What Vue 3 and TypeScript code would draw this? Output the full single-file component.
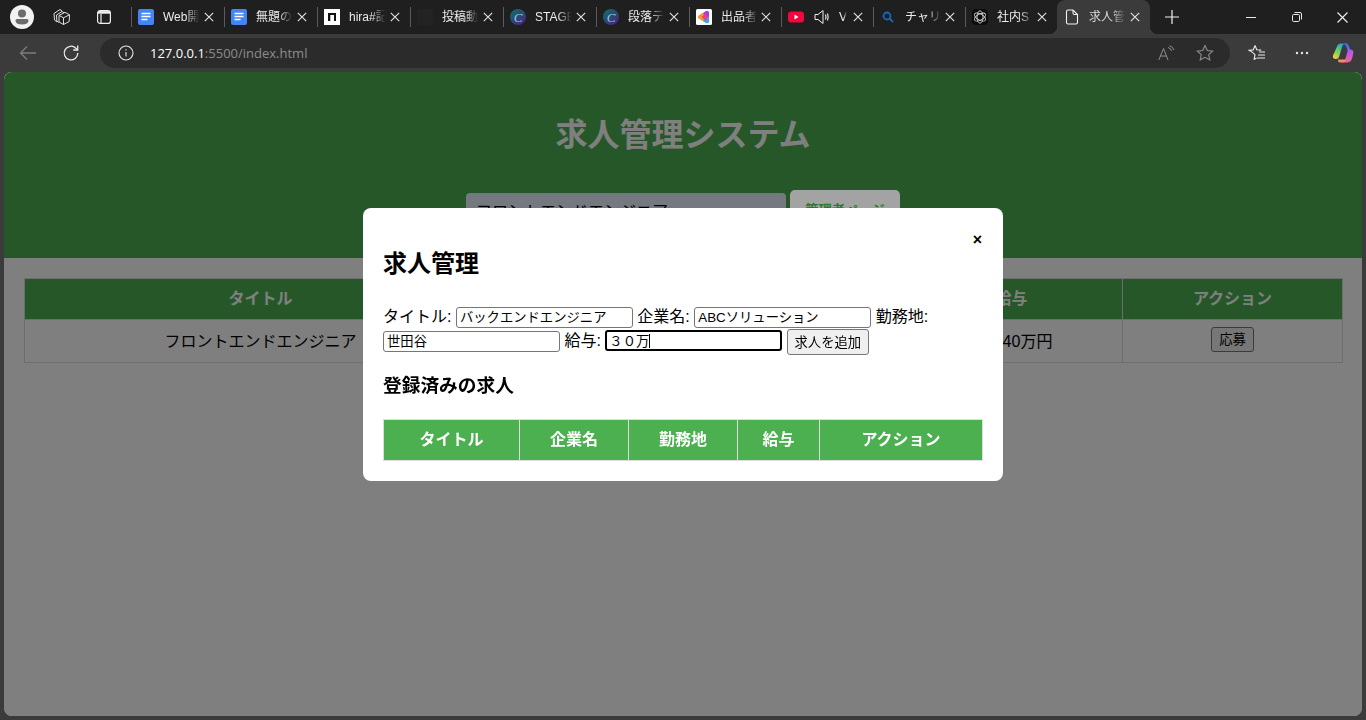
<script setup lang="ts">
import { onMounted, ref } from 'vue'

interface BrowserTab {
  title: string
  icon: string
  width: number
  active?: boolean
}

const tabs: BrowserTab[] = [
  { title: 'Web開', icon: 'doc', width: 93 },
  { title: '無題の', icon: 'doc', width: 93 },
  { title: 'hira#記', icon: 'notion', width: 93 },
  { title: '投稿動', icon: 'dark', width: 93 },
  { title: 'STAGE', icon: 'circle', width: 93 },
  { title: '段落テ', icon: 'circle', width: 93 },
  { title: '出品者', icon: 'rainbow', width: 92 },
  { title: 'V', icon: 'youtube', width: 92 },
  { title: 'チャリD', icon: 'search', width: 92 },
  { title: '社内S', icon: 'gpt', width: 92 },
  { title: '求人管', icon: 'file', width: 93, active: true },
]

const salaryInput = ref<HTMLInputElement | null>(null)

onMounted(() => {
  const el = salaryInput.value
  if (el) {
    el.focus()
    el.setSelectionRange(el.value.length, el.value.length)
  }
})
</script>

<template>
  <div class="window">
    <div class="tabstrip">
      <div class="strip-left">
        <div class="avatar">
          <svg width="24" height="24" viewBox="0 0 24 24">
            <circle cx="12" cy="12" r="12" fill="#f2f2f2" />
            <circle cx="12" cy="8.500" r="4" fill="#6b6b6b" />
            <path d="M5.500 15.500q0-1.500 1.500-1.500h10q1.500 0 1.500 1.500q0 4-6.500 4t-6.500-4z" fill="#6b6b6b" />
          </svg>
        </div>
        <svg class="strip-icon" width="18" height="18" viewBox="0 0 18 18" fill="none" stroke="#e0e0e0" stroke-width="1">
          <path d="M1 5.500L7 1.500l2 1.300M3.500 7L9 3.500l2 1.200" />
          <path d="M1 5.500l.5 6.500 2.500 2M3.500 7l.3 6 2 1.500" />
          <path d="M6 7.500l6-3.200 4.500 2.500-.3 6.700-5.700 3-4.500-2.500z" />
          <path d="M10.500 9.800v6.700M6 7.500l4.500 2.300 6-3" />
        </svg>
        <svg class="strip-icon" width="16" height="16" viewBox="0 0 16 16" fill="none" stroke="#f0f0f0" stroke-width="1.200">
          <rect x="1.600" y="1.600" width="12.800" height="12.800" rx="2.500" />
          <path d="M2 3.400h12" stroke-width="2.600" />
          <path d="M5 4.800v9.600" />
        </svg>
      </div>

      <div
        v-for="tab in tabs"
        :key="tab.icon + tab.title"
        class="tab"
        :class="{ active: tab.active }"
        :style="{ width: tab.width + 'px' }"
      >
        <span class="tab-sep"></span>
        <svg v-if="tab.icon === 'doc'" width="16" height="16" viewBox="0 0 16 16">
          <rect width="16" height="16" rx="2" fill="#4285f4" />
          <path d="M3.500 4.500h9M3.500 7.500h9M3.500 10.500h6" stroke="#fff" stroke-width="1.500" />
        </svg>
        <svg v-else-if="tab.icon === 'notion'" width="16" height="16" viewBox="0 0 16 16">
          <rect width="16" height="16" fill="#fff" />
          <path d="M4 4h8v8h-2V6H6.300v6H4z" fill="#111" />
        </svg>
        <svg v-else-if="tab.icon === 'dark'" width="16" height="16" viewBox="0 0 16 16">
          <rect width="16" height="16" rx="3" fill="#232323" />
        </svg>
        <svg v-else-if="tab.icon === 'circle'" width="16" height="16" viewBox="0 0 16 16">
          <defs>
            <linearGradient id="stageFill" x1="0" y1="0" x2="0.700" y2="1">
              <stop offset="0" stop-color="#12706b" />
              <stop offset="0.500" stop-color="#24506f" />
              <stop offset="1" stop-color="#4a2485" />
            </linearGradient>
          </defs>
          <circle cx="8" cy="8" r="8" fill="url(#stageFill)" />
          <text x="8" y="12.500" text-anchor="middle" class="stage-letter">C</text>
        </svg>
        <svg v-else-if="tab.icon === 'rainbow'" width="16" height="16" viewBox="0 0 16 16">
          <rect width="16" height="16" rx="1.500" fill="#fff" />
          <path d="M2 8q0-1 1-1.600L10 2q2.500-1.200 3 1.500V8z" fill="#a63be8" />
          <path d="M2 8q0 1 1 1.600L10 14q2.500 1.200 3-1.500V8z" fill="#35a7ea" />
          <path d="M2 8q0-1 1-1.600L7.500 3.500 8 8l-.5 4.500L3 9.600Q2 9 2 8z" fill="#f6a01e" />
          <path d="M5.500 8L9.500 4.500 12 8l-2.500 3.500z" fill="#ee3d93" />
        </svg>
        <template v-else-if="tab.icon === 'youtube'">
          <svg width="16" height="12" viewBox="0 0 16 12">
            <rect width="16" height="11" y="0.500" rx="3" fill="#f4063c" />
            <path d="M6.500 3.500l4 2.500-4 2.500z" fill="#fff" />
          </svg>
          <svg class="speaker" width="16" height="16" viewBox="0 0 16 16" fill="none" stroke="#efefef" stroke-width="1">
            <path d="M1 5.500h3L9 1.500v13l-5-4H1z" />
            <path d="M11.500 5.500q1 2.500 0 5M13.500 4.500q1.300 3.500 0 7" stroke-width="1.100" />
          </svg>
        </template>
        <svg v-else-if="tab.icon === 'search'" width="16" height="16" viewBox="0 0 16 16" fill="none" stroke="#0f6cbd" stroke-width="1.800">
          <circle cx="7" cy="7" r="3.500" />
          <path d="M9.700 9.700l3.300 3.300" />
        </svg>
        <svg v-else-if="tab.icon === 'gpt'" width="16" height="16" viewBox="0 0 16 16">
          <rect width="16" height="16" rx="4" fill="#0c0c0c" />
          <g fill="none" stroke="#cfcfcf" stroke-width=".9">
            <ellipse cx="8" cy="8" rx="3" ry="6.200" />
            <ellipse cx="8" cy="8" rx="3" ry="6.200" transform="rotate(60 8 8)" />
            <ellipse cx="8" cy="8" rx="3" ry="6.200" transform="rotate(120 8 8)" />
          </g>
        </svg>
        <svg v-else width="16" height="16" viewBox="0 0 16 16" fill="none" stroke="#f2f2f2" stroke-width="1.100">
          <path d="M2.500 2.500Q2.500 1 4 1h5l4.500 4.500v8Q13.500 15 12 15H4q-1.500 0-1.500-1.500zM9 1v3q0 1.500 1.500 1.500h3" />
        </svg>
        <span class="tab-title" :class="{ narrow: tab.icon === 'youtube' }">{{ tab.title }}</span>
        <svg class="tab-close" width="10" height="10" viewBox="0 0 10 10" stroke="#e4e4e4" stroke-width="1.100">
          <path d="M.8 .8l8.400 8.400M9.200 .8L.8 9.200" />
        </svg>
      </div>

      <svg class="new-tab" width="16" height="16" viewBox="0 0 16 16" stroke="#f0f0f0" stroke-width="1.200">
        <path d="M8 1v14M1 8h14" />
      </svg>

      <div class="window-controls">
        <svg width="10" height="10" viewBox="0 0 10 10" stroke="#e8e8e8"><path d="M0 5.500h10" /></svg>
        <svg width="10" height="10" viewBox="0 0 10 10" fill="none" stroke="#e8e8e8">
          <rect x=".5" y="2.500" width="7" height="7" rx="1.200" />
          <path d="M2.500 .5h5.500q1.500 0 1.500 1.500v5.500" />
        </svg>
        <svg width="11" height="11" viewBox="0 0 11 11" stroke="#f0f0f0" stroke-width="1.100"><path d="M.5 .5l10 10M10.500 .5l-10 10" /></svg>
      </div>
    </div>

    <div class="toolbar">
      <svg class="tool-back" width="18" height="16" viewBox="0 0 18 16" fill="none" stroke="#7d7d7d" stroke-width="1.300">
        <path d="M17 8H1.500M8 1.500L1.500 8 8 14.500" />
      </svg>
      <svg class="tool-reload" width="18" height="18" viewBox="0 0 18 18" fill="none" stroke="#ececec" stroke-width="1.300">
        <path d="M15.800 9a6.800 6.800 0 1 1-2-4.800L15.500 6" />
        <path d="M15.700 1.500V6h-4.500" />
      </svg>

      <div class="address">
        <svg width="16" height="16" viewBox="0 0 16 16" fill="none" stroke="#e6e6e6" stroke-width="1.100">
          <circle cx="8" cy="8" r="7" />
          <path d="M8 7v4.500M8 4.200v1.300" />
        </svg>
        <span class="url"><span class="url-host">127.0.0.1</span>:5500/index.html</span>
        <span class="address-spacer"></span>
        <svg width="16" height="16" viewBox="0 0 16 16" fill="none" stroke="#8f8f8f" stroke-width="1">
          <path d="M.8 15L5.500 3.500 10 15M2.500 11h6" />
          <path d="M10 2.500q3 .5 3.500 3.500M11.500 .8q3.800 .8 4.200 4.200" />
        </svg>
        <svg class="address-star" width="18" height="18" viewBox="0 0 18 18" fill="none" stroke="#8f8f8f" stroke-width="1.100">
          <path d="M9 1.500l2.300 5 5.400 .6-4 3.600 1.100 5.300L9 13.300 4.200 16l1.100-5.300-4-3.600 5.400-.6z" />
        </svg>
      </div>

      <svg class="tool-fav" width="18" height="18" viewBox="0 0 18 18" fill="none" stroke="#ececec" stroke-width="1.100">
        <path d="M7 1.500l1.800 4.300 4.400 .3M6 15.500l1-4.800L3 7.200l-2.500-1 4.700-.3L7 1.500M6 15.500l2.500-1.500" />
        <path d="M11 8h6M10 11h7M9 14h8" />
      </svg>
      <svg class="tool-more" width="14" height="4" viewBox="0 0 14 4" fill="#e8e8e8">
        <circle cx="2" cy="2" r="1.200" /><circle cx="7" cy="2" r="1.200" /><circle cx="12" cy="2" r="1.200" />
      </svg>
      <svg class="tool-copilot" width="22" height="22" viewBox="0 0 22 22">
        <defs>
          <linearGradient id="copLeft" x1="0.700" y1="0" x2="0.200" y2="1">
            <stop offset="0" stop-color="#1f9fd8" />
            <stop offset="0.450" stop-color="#5fd06a" />
            <stop offset="1" stop-color="#f2d23a" />
          </linearGradient>
          <linearGradient id="copRight" x1="0.400" y1="0" x2="0.600" y2="1">
            <stop offset="0" stop-color="#1f6ff0" />
            <stop offset="0.450" stop-color="#a65cf0" />
            <stop offset="1" stop-color="#f4608f" />
          </linearGradient>
        </defs>
        <path d="M5.500 3.500Q6.300 1.500 8.500 1.500H13Q10.800 2 10 5l-2.800 9.500Q6.500 17 4 17H3.200Q.3 16.500 1 13.500z" fill="url(#copLeft)" />
        <path d="M11.500 1h2.300q2 0 2.800 2.200l1.400 4.300h1.200q2.300 .5 2.300 3l-1.300 5.500q-1 4-4.700 4.500H9.500q3-.6 4-4l2-7q.7-3-4-8.500z" fill="url(#copRight)" />
        <path d="M6 17.500h8.500q-1 2.800-3.500 3H8q-2.200 0-2-3z" fill="#f78a5e" />
      </svg>
    </div>

    <div class="viewport">
      <div class="page">
        <header class="page-header">
          <h1>求人管理システム</h1>
          <div class="search-row">
            <input class="search-input" type="text" value="フロントエンドエンジニア" readonly />
            <button class="admin-button" type="button">管理者ページ</button>
          </div>
        </header>

        <main class="page-main">
          <table class="jobs-table">
            <colgroup>
              <col class="col-title" />
              <col class="col-mid" />
              <col class="col-mid" />
              <col class="col-salary" />
              <col class="col-action" />
            </colgroup>
            <thead>
              <tr>
                <th>タイトル</th>
                <th>企業名</th>
                <th>勤務地</th>
                <th>給与</th>
                <th>アクション</th>
              </tr>
            </thead>
            <tbody>
              <tr>
                <td>フロントエンドエンジニア</td>
                <td></td>
                <td></td>
                <td>月給40万円</td>
                <td><button class="plain-button" type="button">応募</button></td>
              </tr>
            </tbody>
          </table>
        </main>

        <div class="overlay">
          <section class="modal">
            <span class="modal-close">×</span>
            <h2>求人管理</h2>
            <form class="job-form" @submit.prevent>
              <label>タイトル:</label>
              {{ ' ' }}<input class="field" type="text" value="バックエンドエンジニア" />{{ ' ' }}
              <label>企業名:</label>
              {{ ' ' }}<input class="field" type="text" value="ABCソリューション" />{{ ' ' }}
              <label>勤務地:</label>
              {{ ' ' }}<input class="field" type="text" value="世田谷" />{{ ' ' }}
              <label>給与:</label>
              {{ ' ' }}<input ref="salaryInput" class="field" type="text" value="３０万" />{{ ' ' }}
              <button class="plain-button add-button" type="submit">求人を追加</button>
            </form>
            <h3>登録済みの求人</h3>
            <table class="registered-table">
              <colgroup>
                <col class="reg-1" />
                <col class="reg-2" />
                <col class="reg-2" />
                <col class="reg-3" />
                <col class="reg-4" />
              </colgroup>
              <thead>
                <tr>
                  <th>タイトル</th>
                  <th>企業名</th>
                  <th>勤務地</th>
                  <th>給与</th>
                  <th>アクション</th>
                </tr>
              </thead>
            </table>
          </section>
        </div>
      </div>
    </div>
  </div>
</template>

<style scoped>
.window {
  width: 1366px;
  height: 720px;
  display: flex;
  flex-direction: column;
  overflow: hidden;
  background: #3b3b3b;
  font-family: "Liberation Sans", "Noto Sans CJK JP", sans-serif;
}

/* browser chrome */
.tabstrip {
  height: 34px;
  flex: none;
  display: flex;
  align-items: center;
  background: #1f1f1f;
}

.strip-left {
  width: 131px;
  flex: none;
  display: flex;
  align-items: center;
  padding-left: 10px;
  box-sizing: border-box;
}

.avatar {
  display: flex;
  width: 24px;
  height: 24px;
}

.strip-icon:nth-child(2) {
  margin-left: 19px;
}

.strip-icon:nth-child(3) {
  margin-left: 25px;
}

.tab {
  height: 34px;
  flex: none;
  box-sizing: border-box;
  display: flex;
  align-items: center;
  position: relative;
  color: #ececec;
  font-size: 12px;
}

.tab-sep {
  width: 1px;
  height: 20px;
  margin-right: 6px;
  background: #5c5c5c;
  flex: none;
}

.tab svg {
  flex: none;
}

.speaker {
  margin-left: 10px;
}

.tab-title {
  width: 38px;
  margin-left: 9px;
  white-space: nowrap;
  overflow: hidden;
  flex: none;
  line-height: 16px;
  -webkit-mask-image: linear-gradient(to right, #000 60%, transparent 96%);
  mask-image: linear-gradient(to right, #000 60%, transparent 96%);
}

.tab-title.narrow {
  width: 8px;
}

.tab-close {
  position: absolute;
  right: 10px;
  top: 12px;
}

.tab.active {
  background: #3b3b3b;
  border-radius: 8px 8px 0 0;
}

.tab.active .tab-sep {
  visibility: hidden;
}

.tab.active .tab-title {
  color: #d8d8d8;
}

.tab.active::before,
.tab.active::after {
  content: "";
  position: absolute;
  bottom: 0;
  width: 8px;
  height: 8px;
}

.tab.active::before {
  left: -8px;
  background: radial-gradient(circle at 0 0, transparent 8px, #3b3b3b 8.5px);
}

.tab.active::after {
  right: -8px;
  background: radial-gradient(circle at 100% 0, transparent 8px, #3b3b3b 8.5px);
}

.new-tab {
  margin-left: 14px;
  flex: none;
}

.window-controls {
  margin-left: auto;
  width: 138px;
  display: flex;
  align-items: center;
  justify-content: space-between;
  padding: 0 18px 0 18px;
  box-sizing: border-box;
}

.toolbar {
  height: 38px;
  flex: none;
  box-sizing: border-box;
  padding: 4px 0;
  display: flex;
  align-items: center;
  background: #3b3b3b;
}

.tool-back {
  margin-left: 19px;
  flex: none;
}

.tool-reload {
  margin-left: 25px;
  flex: none;
}

.address {
  width: 1130px;
  height: 30px;
  margin-left: 20px;
  flex: none;
  box-sizing: border-box;
  border-radius: 15px;
  background: #2b2b2b;
  display: flex;
  align-items: center;
  padding: 0 16px 0 18px;
}

.url {
  margin-left: 16px;
  font-family: "Open Sans", "Noto Sans", sans-serif;
  font-size: 13px;
  color: #8c8c8c;
  white-space: nowrap;
}

.url-host {
  color: #ffffff;
}

.address-spacer {
  flex: 1;
}

.address-star {
  margin-left: 22px;
}

.tool-fav {
  margin-left: 18px;
  flex: none;
}

.tool-more {
  margin-left: 29px;
  flex: none;
}

.tool-copilot {
  margin-left: 23px;
  flex: none;
}

.viewport {
  flex: 1;
  min-height: 0;
  display: flex;
  padding: 0 4px 4px;
}

/* page under the dialog */
.page {
  flex: 1;
  position: relative;
  overflow: hidden;
  border-radius: 8px;
  background: #ffffff;
}

.page-header {
  height: 186px;
  box-sizing: border-box;
  padding-top: 40px;
  background: #4caf50;
  color: #ffffff;
  text-align: center;
}

.page-header h1 {
  margin: 0;
  font-size: 32px;
  line-height: 46px;
  font-weight: 700;
}

.search-row {
  margin-top: 32px;
  display: flex;
  justify-content: center;
  align-items: flex-start;
  gap: 4px;
}

.search-input {
  width: 320px;
  height: 34px;
  margin-top: 3px;
  box-sizing: border-box;
  border: none;
  border-radius: 4px;
  padding: 0 10px;
  background: #e8f0fe;
  font-family: inherit;
  font-size: 16px;
  color: #000000;
}

/* sits above the dimming layer, below the dialog */
.admin-button {
  position: relative;
  z-index: 3;
  width: 110px;
  height: 44px;
  padding: 0 0 5px;
  border: none;
  border-radius: 5px;
  background: #a3a3a3;
  color: #2a7a2e;
  font-family: inherit;
  font-size: 13.333px;
  font-weight: 700;
}

.page-main {
  padding: 20px;
}

.jobs-table {
  width: 1318px;
  table-layout: fixed;
  border-collapse: collapse;
  font-size: 16px;
  color: #000000;
}

.col-title {
  width: 472px;
}

.col-mid {
  width: 202px;
}

.col-salary {
  width: 222px;
}

.col-action {
  width: 220px;
}

.jobs-table th,
.jobs-table td,
.registered-table th {
  border: 1px solid #dddddd;
  padding: 0 12px;
  text-align: center;
}

.jobs-table th,
.registered-table th {
  height: 41px;
  padding-bottom: 4px;
  box-sizing: border-box;
  background: #4caf50;
  color: #ffffff;
  font-size: 16px;
  font-weight: 700;
}

.jobs-table td {
  height: 43px;
  padding-bottom: 3px;
  box-sizing: border-box;
}

.plain-button {
  box-sizing: border-box;
  height: 25px;
  padding: 0 6.700px 2px;
  border: 1px solid #767676;
  border-radius: 3px;
  background: #efefef;
  color: #000000;
  font-family: inherit;
  font-size: 13.333px;
  vertical-align: middle;
}

/* dialog: no z-index here so the modal and the button share one stacking context */
.overlay {
  position: absolute;
  inset: 0;
  display: flex;
  justify-content: center;
  align-items: flex-start;
  padding-top: 136px;
  background: rgba(0, 0, 0, 0.5);
}

.modal {
  position: relative;
  z-index: 4;
  width: 640px;
  box-sizing: border-box;
  padding: 20px;
  border-radius: 8px;
  background: #ffffff;
  color: #000000;
}

.modal-close {
  position: absolute;
  top: 19px;
  right: 21px;
  font-size: 16px;
  line-height: 26px;
  font-weight: 700;
}

.modal h2 {
  margin: 20px 0 25px;
  font-size: 24px;
  line-height: 32px;
  font-weight: 700;
}

.job-form {
  font-size: 16px;
  line-height: 24px;
}

.field {
  box-sizing: border-box;
  width: 177px;
  height: 21px;
  padding: 0 3px 1px;
  border: 1px solid #767676;
  border-radius: 3px;
  background: #ffffff;
  color: #000000;
  font-family: inherit;
  font-size: 13.333px;
}

/* the caret blinks, so its line is also painted to stay in the shot */
.field:focus {
  outline: none;
  border: 2px solid #000000;
  padding: 0 2px;
  caret-color: #000000;
  background: linear-gradient(#000000, #000000) no-repeat 42px center / 1px 14px #ffffff;
}

.add-button {
  height: 26px;
}

.modal h3 {
  margin: 18px 0 20px;
  font-size: 18.720px;
  line-height: 26px;
  font-weight: 700;
}

.registered-table {
  width: 600px;
  table-layout: fixed;
  border-collapse: collapse;
}

.reg-1 {
  width: 136px;
}

.reg-2 {
  width: 109px;
}

.reg-3 {
  width: 82px;
}

.reg-4 {
  width: 163px;
}

.stage-letter {
  font-family: "Liberation Serif", serif;
  font-style: italic;
  font-size: 13px;
  fill: #9fc3e0;
}
</style>

<style>
html,
body {
  margin: 0;
  background: #3b3b3b;
}
</style>
